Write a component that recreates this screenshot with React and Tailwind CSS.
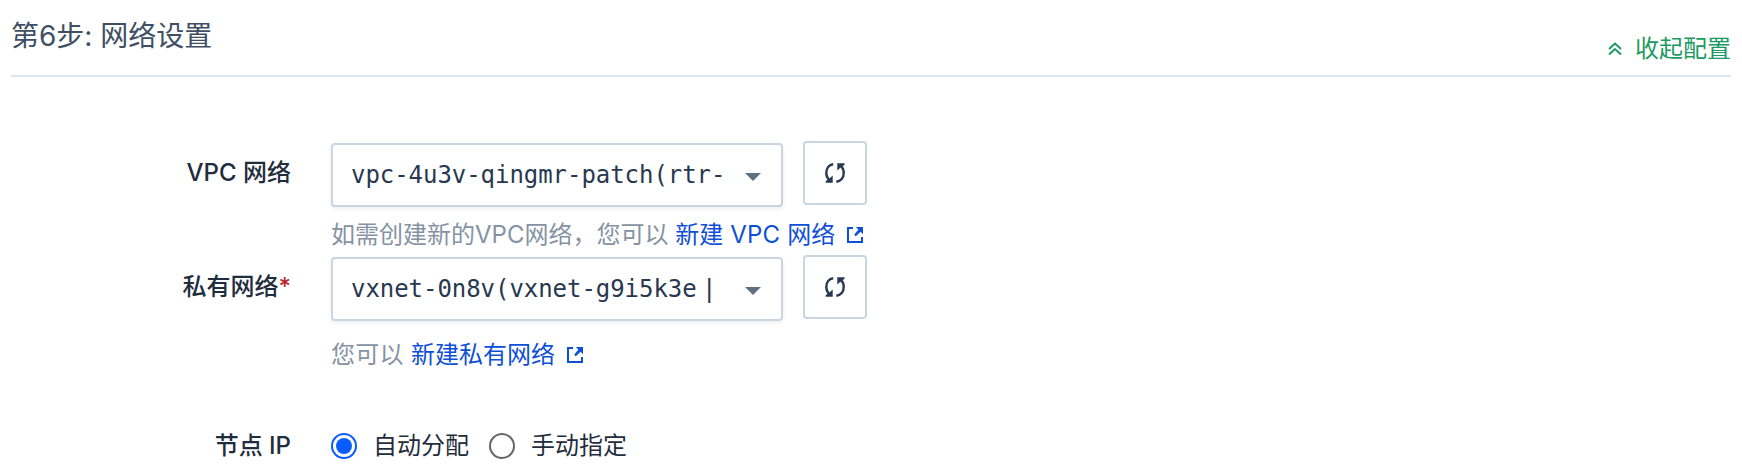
function RefreshIcon() {
  return (
    <svg className="block h-6 w-6" viewBox="0 0 24 24" fill="none">
      <path d="M10.200 3.300C6 3.800 3.300 7.300 3.300 12C3.300 14.800 4.300 17.200 6 18.800M13.300 20.700C17.800 20.200 20.700 16.700 20.700 12C20.700 9.200 19.700 6.800 18 5.200" stroke="#283850" strokeWidth="2.400" />
      <path d="M9.700 14.500V21.700H2.700V20L5 18.800ZM14.300 9.500V2.300H21.500V4L19 5.200Z" fill="#283850" />
    </svg>
  );
}

function ExternalIcon() {
  return (
    <svg className="block h-4 w-4 shrink-0" viewBox="0 0 16 16" fill="none">
      <path d="M6 1H1V15H15V10" stroke="#0d4fd6" strokeWidth="2" />
      <path d="M8.800 0H16V7.200L13.600 4.800L8.800 9.300L7.200 7.700L11.400 2.600Z" fill="#0d4fd6" />
    </svg>
  );
}

function Label({ children }) {
  return (
    <div className="flex w-[280px] shrink-0 justify-end whitespace-nowrap pt-4 text-2xl leading-8 font-medium text-[#1f2d3d]">
      {children}
    </div>
  );
}

function SelectRow({ children }) {
  return (
    <div className="flex items-start gap-5">
      <div className="mt-0.5 flex h-16 w-[452px] items-center rounded-[4px] border-2 border-[#cad5e2] bg-white pl-[18px] shadow-[0_2px_4px_rgba(40,56,80,0.08)]">
        <div className="w-[376px] shrink-0 whitespace-pre font-['DejaVu_Sans_Mono','Liberation_Mono',monospace] text-[24px] leading-8 tracking-[-0.05px] text-[#283850] [word-spacing:-9px]">
          {children}
        </div>
        <svg className="mt-[3px] ml-[18px] h-2 w-4 shrink-0" viewBox="0 0 16 8">
          <path d="M0 0H16L8 8Z" fill="#617080" />
        </svg>
      </div>
      <button className="flex h-16 w-16 items-center justify-center rounded-[4px] border-2 border-[#cad5e2] bg-white">
        <RefreshIcon />
      </button>
    </div>
  );
}

function Radio({ checked, children }) {
  return (
    <label className="flex items-center gap-4">
      {checked ? (
        <span className="flex h-[26px] w-[26px] items-center justify-center rounded-full border-2 border-[#0b5cff]">
          <span className="h-4 w-4 rounded-full bg-[#0b5cff]" />
        </span>
      ) : (
        <span className="h-[26px] w-[26px] rounded-full border-2 border-[#666]" />
      )}
      <span>{children}</span>
    </label>
  );
}

export default function App() {
  return (
    <div className="h-[472px] w-[1742px] overflow-hidden bg-white px-[11px] font-['Inter','Noto_Sans_CJK_SC',sans-serif]">
      <header className="flex h-[77px] items-start justify-between border-b-2 border-[#dce6ee]">
        <h2 className="pt-4 text-[28px] leading-10 font-normal text-[#404f63]">第6步: 网络设置</h2>
        <button className="flex items-center gap-[14px] pt-[33px] text-2xl leading-8 text-[#1b9a61]">
          <svg className="-mr-px h-[14px] w-[14px]" viewBox="0 0 14 14" fill="none">
            <path d="M1 7L7 1.500L13 7M1 12.500L7 7L13 12.500" stroke="currentColor" strokeWidth="2" />
          </svg>
          <span>收起配置</span>
        </button>
      </header>

      <main className="pt-16">
        <section className="flex h-[114px]">
          <Label>VPC 网络</Label>
          <div className="ml-10 flex flex-col">
            <SelectRow>vpc-4u3v-qingmr-patch(rtr-</SelectRow>
            <div className="mt-3 flex items-center whitespace-pre text-2xl leading-8 text-[#8592a3]">
              <span>如需创建新的VPC网络，您可以 </span>
              <a className="flex items-center gap-3 text-[#0d4fd6]"><span className="tracking-[0.15px]">新建 VPC 网络</span><ExternalIcon /></a>
            </div>
          </div>
        </section>

        <section className="flex h-[159px]">
          <Label>私有网络<span className="text-[#ba2632]">*</span></Label>
          <div className="ml-10 flex flex-col">
            <SelectRow>vxnet-0n8v(vxnet-g9i5k3e |</SelectRow>
            <div className="mt-[18px] flex items-center whitespace-pre text-2xl leading-8 text-[#8592a3]">
              <span className="tracking-[0.3px]">您可以 </span>
              <a className="flex items-center gap-3 text-[#0d4fd6]"><span>新建私有网络</span><ExternalIcon /></a>
            </div>
          </div>
        </section>

        <section className="flex">
          <Label>节点 IP</Label>
          <div className="ml-10 flex gap-5 pt-[15px] text-2xl leading-8 text-[#1f2d3d]">
            <Radio checked>自动分配</Radio>
            <Radio>手动指定</Radio>
          </div>
        </section>
      </main>
    </div>
  );
}
